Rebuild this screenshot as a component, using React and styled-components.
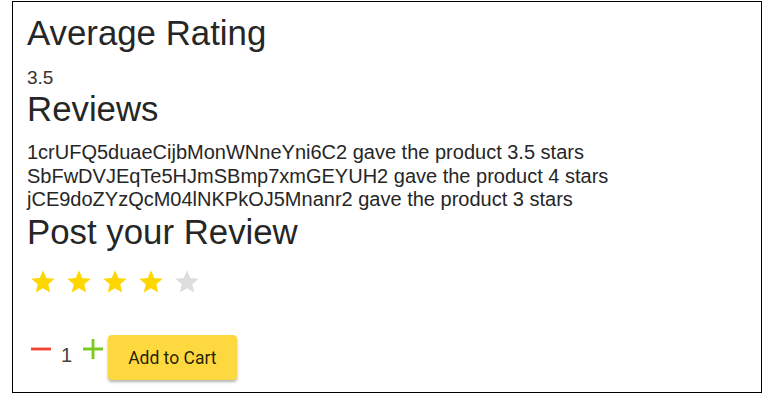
import React from "react";
import styled, { createGlobalStyle } from "styled-components";

const Global = createGlobalStyle`
  body { margin: 0; font-family: "Liberation Sans", Arial, sans-serif; background: #fff; }
`;

const Frame = styled.div`
  margin: 1px 9px 0 12px;
  height: 392px;
  box-sizing: border-box;
  border: 1px solid #000;
  padding: 11px 14px 0;
  color: #262626;
`;

const Heading = styled.h2`
  margin: 0;
  font-size: 34.8px;
  font-weight: 400;
  line-height: 40.25px;
`;

const Value = styled.div`
  font-size: 19px;
  line-height: 21.85px;
  margin-top: 14px;
  color: #333;
`;

const ReviewList = styled.div`
  margin-top: 12px;
  font-size: 20px;
  line-height: 23.5px;
`;

const Stars = styled.div`
  display: flex;
  gap: 8px;
  padding: 16px 0 0 2px;
`;

const Controls = styled.div`
  display: flex;
  align-items: center;
  margin-top: 39px;
  padding-left: 4px;
`;

const SignIcon = styled.svg`
  width: 20px;
  height: 20px;
  margin-bottom: 18px;
  fill: ${(p) => p.$color};
`;

const Qty = styled.span`
  font-size: 20px;
  line-height: 23px;
  margin: 0 11px 4px 10px;
  color: #444;
`;

const CartButton = styled.button`
  margin-left: 5px;
  height: 45px;
  padding: 0 20px;
  border: none;
  border-radius: 4px;
  background: #fdd83e;
  color: rgba(0, 0, 0, 0.87);
  font-family: Roboto, sans-serif;
  font-size: 17.5px;
  box-shadow: 0 2px 3px rgba(0, 0, 0, 0.3);
`;

const Star = ({ filled }) => (
  <svg width="28" height="28" viewBox="0 0 24 24">
    <path
      fill={filled ? "#ffd700" : "#dddddd"}
      d="M12 17.27L18.18 21l-1.64-7.03L22 9.24l-7.19-.61L12 2 9.19 8.63 2 9.24l5.46 4.73L5.82 21z"
    />
  </svg>
);

const reviews = [
  "1crUFQ5duaeCijbMonWNneYni6C2 gave the product 3.5 stars",
  "SbFwDVJEqTe5HJmSBmp7xmGEYUH2 gave the product 4 stars",
  "jCE9doZYzQcM04lNKPkOJ5Mnanr2 gave the product 3 stars",
];

export default function App() {
  return (
    <>
      <Global />
      <Frame>
        <Heading>Average Rating</Heading>
        <Value>3.5</Value>
        <Heading>Reviews</Heading>
        <ReviewList>
          {reviews.map((r) => (
            <div key={r}>{r}</div>
          ))}
        </ReviewList>
        <Heading>Post your Review</Heading>
        <Stars>
          {[1, 2, 3, 4, 5].map((i) => (
            <Star key={i} filled={i <= 4} />
          ))}
        </Stars>
        <Controls>
          <SignIcon $color="#f44336" viewBox="5 5 14 14">
            <path d="M19 13H5v-2h14v2z" />
          </SignIcon>
          <Qty>1</Qty>
          <SignIcon $color="#7cc91f" viewBox="5 5 14 14">
            <path d="M19 13h-6v6h-2v-6H5v-2h6V5h2v6h6v2z" />
          </SignIcon>
          <CartButton>Add to Cart</CartButton>
        </Controls>
      </Frame>
    </>
  );
}
